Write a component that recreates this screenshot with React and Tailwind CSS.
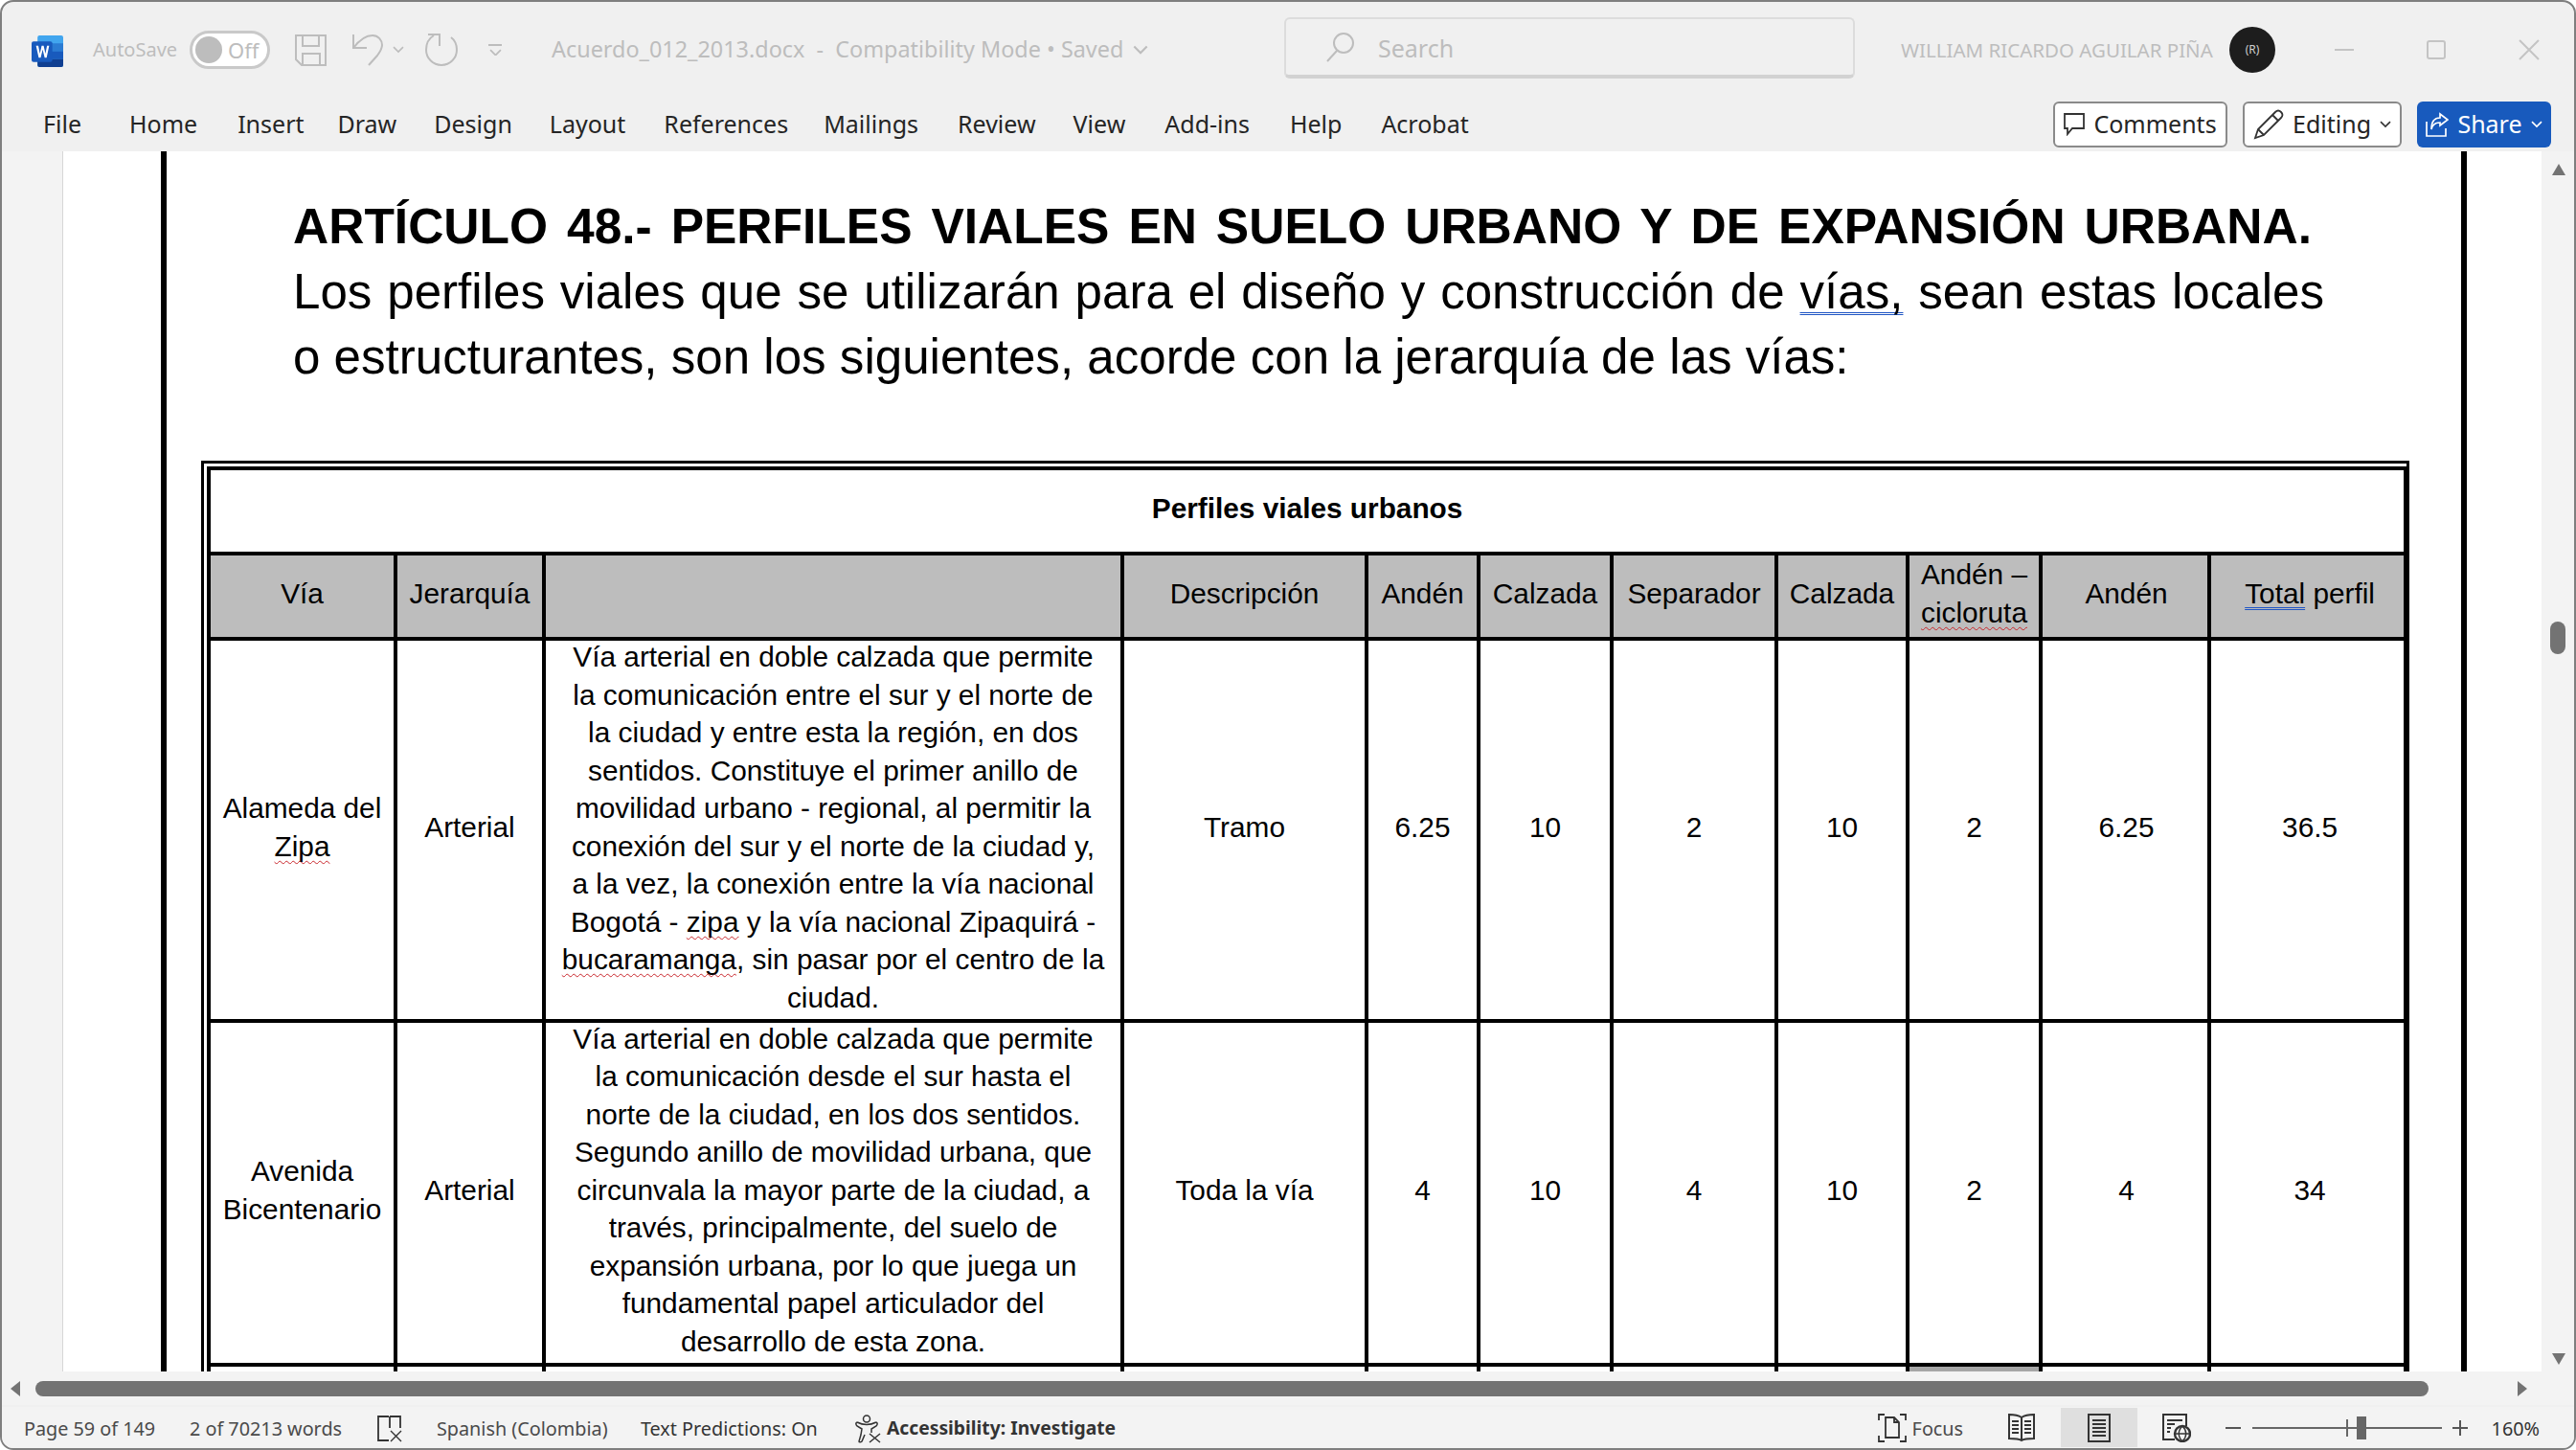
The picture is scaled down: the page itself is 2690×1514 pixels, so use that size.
import React from 'react';

const uiFont = { fontFamily: '"Noto Sans", sans-serif' };

const tabs = [
  { label: 'Home', className: 'ml-[2px]' },
  { label: 'Insert', className: 'ml-[3px] -mr-[4px]' },
  { label: 'Draw' },
  { label: 'Design' },
  { label: 'Layout' },
  { label: 'References', className: 'ml-[1px] -mr-[1px]' },
  { label: 'Mailings', className: '-ml-[1px] mr-[1px]' },
  { label: 'Review', className: 'ml-[1px]' },
  { label: 'View' },
  { label: 'Add-ins', className: 'ml-[2px]' },
  { label: 'Help', className: 'ml-[3px]' },
  { label: 'Acrobat', className: 'ml-[2px]' },
];

const colWidths = ['w-[195px]', 'w-[155px]', 'w-[604px]', 'w-[255px]', 'w-[117px]', 'w-[139px]', 'w-[172px]', 'w-[137px]', 'w-[139px]', 'w-[176px]', 'w-[205px]'];

const Wavy = ({ children }) => (
  <span className="underline decoration-wavy decoration-[#c8262b] decoration-[1px] underline-offset-[4px] [text-decoration-skip-ink:none]">{children}</span>
);

const Grammar = ({ children }) => (
  <span className="underline decoration-double decoration-[#1f55c4] decoration-[1px] underline-offset-[4px] [text-decoration-skip-ink:none]">{children}</span>
);

const Cell = ({ children, className = '', colSpan }) => (
  <td colSpan={colSpan} className={`border-[4px] border-black text-center align-middle p-0 ${className}`}>
    <div className="-mt-[6px]">{children}</div>
  </td>
);

const Head = ({ children, className = '' }) => <Cell className={`bg-[#bdbdbd] ${className}`}>{children}</Cell>;

const WordLogo = () => (
  <svg width="33" height="33" viewBox="0 0 32 32">
    <rect x="6" y="0" width="26" height="32" rx="2" fill="#41a5ee" />
    <rect x="6" y="8" width="26" height="8" fill="#2b7cd3" />
    <rect x="6" y="16" width="26" height="8" fill="#185abd" />
    <path d="M6 24h26v6a2 2 0 0 1-2 2H8a2 2 0 0 1-2-2z" fill="#103f91" />
    <rect x="0" y="6" width="21" height="21" rx="2" fill="#185abd" />
    <path d="M4.500 10.500h2.300l1.600 8 1.800-8h2l1.800 8 1.600-8h2.200l-2.600 12h-2l-2-8.300-2 8.300h-2z" fill="#fff" />
  </svg>
);

const SaveIcon = () => (
  <svg width="33" height="33" viewBox="0 0 33 33" fill="none" stroke="#bdbdbd" strokeWidth="2">
    <path d="M1 1h31v31H7l-6-6z" />
    <path d="M8 1v11h17V1M8 32V20h18v12" />
  </svg>
);

const UndoIcon = () => (
  <svg width="32" height="34" viewBox="0 0 32 34" fill="none" stroke="#bdbdbd" strokeWidth="2">
    <path d="M1 1v14h14" />
    <path d="M1 15C8 6 14 2 21 2c6 0 10 5 10 10 0 4-2 7-5 11l-9 10" />
  </svg>
);

const RedoIcon = () => (
  <svg width="34" height="34" viewBox="0 0 34 34" fill="none" stroke="#bdbdbd" strokeWidth="2">
    <path d="M9 2c-5 3-8 8-8 15a16 16 0 1 0 32 0c0-6-2-10-6-13" />
    <path d="M3 2h12v12" transform="translate(0 -1)" />
  </svg>
);

const Chevron = ({ color = '#bdbdbd', size = 12 }) => (
  <svg width={size} height={size * 0.6} viewBox="0 0 12 7" fill="none" stroke={color} strokeWidth="1.6">
    <path d="M1 1l5 5 5-5" />
  </svg>
);

const SearchIcon = () => (
  <svg width="30" height="32" viewBox="0 0 30 32" fill="none" stroke="#bdbdbd" strokeWidth="2">
    <circle cx="18" cy="12" r="10" />
    <path d="M11 20L1 31" />
  </svg>
);

const CommentIcon = () => (
  <svg width="22" height="24" viewBox="0 0 22 24" fill="none" stroke="#333" strokeWidth="1.8">
    <path d="M1 1h20v15H9l-5 6v-6H1z" />
  </svg>
);

const PencilIcon = () => (
  <svg width="32" height="32" viewBox="0 0 32 32" fill="none" stroke="#333" strokeWidth="1.8">
    <path d="M2 30l3-9L23 3c2-2 4-2 6 0s2 4 0 6L11 27z" />
    <path d="M5 21l6 6M20 6l6 6" />
  </svg>
);

const ShareIcon = () => (
  <svg width="24" height="26" viewBox="0 0 24 26" fill="none" stroke="#fff" strokeWidth="1.7">
    <path d="M1 10v15h20v-8" />
    <path d="M15 2l8 6-8 6v-3c-5 0-8 2-9 7 0-8 3-12 9-12z" />
  </svg>
);

const ProofIcon = () => (
  <svg width="28" height="28" viewBox="0 0 28 28" fill="none" stroke="#333" strokeWidth="1.8">
    <path d="M13 1H2v25h11M14 1h11v12M14 1v12" />
    <path d="M15 16l11 11M26 16L15 27" strokeWidth="1.4" />
  </svg>
);

const AccessIcon = () => (
  <svg width="28" height="30" viewBox="0 0 28 30" fill="none" stroke="#333" strokeWidth="1.5">
    <circle cx="12" cy="4.500" r="3.500" />
    <path d="M2 8c-2 1-1 3 0 4l5 3-1 6-2 7c0 1 2 1 3 0l3-7M22 8c2 1 1 3 0 4l-5 3v4M2 8c4 2 7 2.500 10 2.500S18 10 22 8" />
    <path d="M15 20l11 9M26 20L15 29" />
  </svg>
);

const FocusIcon = () => (
  <svg width="30" height="30" viewBox="0 0 30 30" fill="none" stroke="#333" strokeWidth="1.8">
    <path d="M1 7V1h6M23 1h6v6M1 23v6h6M23 29h6v-6" />
    <path d="M8 25V4h9l5 5v16zM17 4v5h5" />
  </svg>
);

const ReadIcon = () => (
  <svg width="28" height="30" viewBox="0 0 28 30" fill="none" stroke="#333" strokeWidth="2">
    <path d="M14 4C11 2 6 1 1 1v25c5 0 10 0 13 2 3-2 8-2 13-2V1c-5 0-10 1-13 3zM14 4v24" />
    <path d="M4 8h7M4 12h7M4 16h7M4 20h7M17 8h7M17 12h7M17 16h7M17 20h7" />
  </svg>
);

const PrintIcon = () => (
  <svg width="24" height="30" viewBox="0 0 24 30" fill="none" stroke="#333" strokeWidth="2">
    <rect x="1" y="1" width="22" height="28" />
    <path d="M5 7h14M5 11h14M5 15h14M5 19h14M5 23h14" />
  </svg>
);

const WebIcon = () => (
  <svg width="30" height="30" viewBox="0 0 30 30" fill="none" stroke="#333" strokeWidth="2">
    <path d="M13 27H1V1h24v12" />
    <path d="M5 7h16M5 11h8M5 15h4M5 19h3" />
    <circle cx="21" cy="21" r="8" fill="#f3f3f3" strokeWidth="2.400" />
    <path d="M13 21h16M21 13c-5 5-5 11 0 16M21 13c5 5 5 11 0 16" strokeWidth="1.400" />
  </svg>
);

const App = () => {
  return (
    <div className="w-[2690px] h-[1514px] bg-white overflow-hidden">
      <div
        className="w-full h-full flex flex-col bg-[#f0f0f0] border-2 border-[#7f7f7f] rounded-[14px] overflow-hidden text-[#252525]"
        style={uiFont}
      >
        {/* title bar */}
        <div className="h-[64px] mt-[18px] flex items-center text-[#bdbdbd] text-[20px] shrink-0">
          <div className="ml-[31px] mt-[2px]"><WordLogo /></div>
          <span className="ml-[31px] w-[91px]">AutoSave</span>
          <div className="ml-[10px] w-[84px] h-[40px] rounded-full border-[3px] border-[#c9c9c9] bg-white flex items-center">
            <div className="ml-[3px] w-[28px] h-[28px] rounded-full bg-[#bdbdbd]" />
            <span className="ml-[6px] leading-none text-[22px]">Off</span>
          </div>
          <div className="ml-[26px] flex"><SaveIcon /></div>
          <div className="ml-[27px] flex"><UndoIcon /></div>
          <div className="ml-[10px] flex"><Chevron /></div>
          <div className="ml-[22px] flex"><RedoIcon /></div>
          <div className="ml-[32px] flex flex-col items-center gap-[3px]">
            <div className="w-[14px] h-[2px] bg-[#bdbdbd]" />
            <Chevron size={13} />
          </div>
          <span className="ml-[52px] w-[600px] whitespace-nowrap text-[23.400px]">Acuerdo_012_2013.docx&nbsp; - &nbsp;Compatibility Mode • Saved</span>
          <div className="ml-[7px] flex"><Chevron size={16} /></div>
          <div className="ml-[142px] mb-[4px] w-[596px] h-[64px] rounded-[6px] border-2 border-[#dcdcdc] border-b-[4px] border-b-[#d2d2d2] flex items-center">
            <div className="ml-[42px] flex"><SearchIcon /></div>
            <span className="ml-[24px] text-[25px] pt-[3px]">Search</span>
          </div>
          <span className="ml-[48px] text-[20.500px] w-[343px] whitespace-nowrap">WILLIAM RICARDO AGUILAR PIÑA</span>
          <div className="w-[48px] h-[48px] rounded-full bg-[#1d1d1d] flex items-center justify-center text-[12px] text-[#cfcfcf]">(R)</div>
          <div className="ml-[62px] w-[20px] h-[2px] bg-[#c4c4c4]" />
          <div className="ml-[76px] w-[20px] h-[20px] rounded-[3px] border-2 border-[#c4c4c4]" />
          <svg className="ml-[76px]" width="22" height="22" viewBox="0 0 22 22" fill="none" stroke="#c4c4c4" strokeWidth="2">
            <path d="M1 1l20 20M21 1L1 21" />
          </svg>
        </div>

        {/* ribbon tabs */}
        <div className="h-[74px] flex items-center text-[25px] shrink-0 pt-[18px]">
          <span className="ml-[43px] mr-[48px]">File</span>
          <div className="flex gap-[39px]">
            {tabs.map((tab) => (
              <span key={tab.label} className={tab.className}>{tab.label}</span>
            ))}
          </div>
          <div className="ml-auto mr-[24px] flex items-center gap-[16px]">
            <div className="w-[182px] h-[48px] rounded-[6px] border-2 border-[#8a8a8a] bg-white flex items-center justify-center gap-[9px]">
              <CommentIcon />
              <span>Comments</span>
            </div>
            <div className="w-[166px] h-[48px] rounded-[6px] border-2 border-[#8a8a8a] bg-white flex items-center justify-center gap-[9px]">
              <PencilIcon />
              <span>Editing</span>
              <Chevron color="#333" />
            </div>
            <div className="w-[140px] h-[48px] rounded-[6px] bg-[#185abd] text-white flex items-center justify-center gap-[9px]">
              <ShareIcon />
              <span>Share</span>
              <Chevron color="#fff" />
            </div>
          </div>
        </div>

        {/* document */}
        <div className="flex-1 min-h-0 flex bg-[#f3f3f3]">
          <div className="w-[64px] shrink-0 border-r border-[#d6d6d6]" />
          <div className="flex-1 min-w-0 bg-white overflow-hidden pl-[102px]" style={{ fontFamily: '"Liberation Sans", Arial, sans-serif' }}>
            <div className="w-[2408px] h-[1400px] border-x-[6px] border-black text-black">
              <div className="pt-[45px] pl-[132px] w-[2253px] text-[51.100px] leading-[68px]">
                <div className="w-[2108px] h-[68px] font-bold text-[51.500px] -mt-[1px] mb-[1px] [text-align-last:justify]">ARTÍCULO 48.- PERFILES VIALES EN SUELO URBANO Y DE EXPANSIÓN URBANA.</div>
                <div className="[text-align-last:justify]">Los perfiles viales que se utilizarán para el diseño y construcción de <Grammar>vías,</Grammar> sean estas locales</div>
                <div>o estructurantes, son los siguientes, acorde con la jerarquía de las vías:</div>
              </div>

              <div className="mt-[74px] ml-[36px] w-[2306px] border-[3px] border-black p-[3px] text-[29.800px] leading-[39.500px]">
                <table className="w-full table-fixed border-collapse">
                  <colgroup>
                    {colWidths.map((w, i) => (
                      <col key={i} className={w} />
                    ))}
                  </colgroup>
                  <tbody>
                    <tr className="h-[89px]">
                      <Cell className="font-bold" colSpan={11}>Perfiles viales urbanos</Cell>
                    </tr>
                    <tr className="h-[89px]">
                      <Head>Vía</Head>
                      <Head>Jerarquía</Head>
                      <Head />
                      <Head>Descripción</Head>
                      <Head>Andén</Head>
                      <Head>Calzada</Head>
                      <Head>Separador</Head>
                      <Head>Calzada</Head>
                      <Head>Andén –<br /><Wavy>cicloruta</Wavy></Head>
                      <Head className="pl-[3px]">Andén</Head>
                      <Head className="pl-[5px]"><Grammar>Total</Grammar> perfil</Head>
                    </tr>
                    <tr className="h-[399px]">
                      <Cell>Alameda del<br /><Wavy>Zipa</Wavy></Cell>
                      <Cell>Arterial</Cell>
                      <Cell>
                        Vía arterial en doble calzada que permite<br />
                        la comunicación entre el sur y el norte de<br />
                        la ciudad y entre esta la región, en dos<br />
                        sentidos. Constituye el primer anillo de<br />
                        movilidad urbano - regional, al permitir la<br />
                        conexión del sur y el norte de la ciudad y,<br />
                        a la vez, la conexión entre la vía nacional<br />
                        Bogotá - <Wavy>zipa</Wavy> y la vía nacional Zipaquirá -<br />
                        <Wavy>bucaramanga</Wavy>, sin pasar por el centro de la<br />
                        ciudad.
                      </Cell>
                      <Cell>Tramo</Cell>
                      <Cell>6.25</Cell>
                      <Cell>10</Cell>
                      <Cell>2</Cell>
                      <Cell>10</Cell>
                      <Cell>2</Cell>
                      <Cell className="pl-[3px]">6.25</Cell>
                      <Cell className="pl-[5px]">36.5</Cell>
                    </tr>
                    <tr className="h-[359px]">
                      <Cell>Avenida<br />Bicentenario</Cell>
                      <Cell>Arterial</Cell>
                      <Cell>
                        Vía arterial en doble calzada que permite<br />
                        la comunicación desde el sur hasta el<br />
                        norte de la ciudad, en los dos sentidos.<br />
                        Segundo anillo de movilidad urbana, que<br />
                        circunvala la mayor parte de la ciudad, a<br />
                        través, principalmente, del suelo de<br />
                        expansión urbana, por lo que juega un<br />
                        fundamental papel articulador del<br />
                        desarrollo de esta zona.
                      </Cell>
                      <Cell>Toda la vía</Cell>
                      <Cell>4</Cell>
                      <Cell>10</Cell>
                      <Cell>4</Cell>
                      <Cell>10</Cell>
                      <Cell>2</Cell>
                      <Cell className="pl-[3px]">4</Cell>
                      <Cell className="pl-[5px]">34</Cell>
                    </tr>
                    <tr className="h-[120px]">
                      <Cell />
                      <Cell />
                      <td className="border-[4px] border-black text-center align-top p-0">Vía arterial de doble calzada que articula</td>
                      <Cell />
                      <Cell />
                      <Cell />
                      <Cell />
                      <Cell />
                      <Cell className="bg-[#a6a6a6]" />
                      <Cell />
                      <Cell />
                    </tr>
                  </tbody>
                </table>
              </div>
            </div>
          </div>

          {/* vertical scrollbar */}
          <div className="w-[34px] shrink-0 relative">
            <svg className="absolute left-[10px] top-[12px]" width="16" height="14" viewBox="0 0 16 14" fill="#737373">
              <path d="M8 1l7 12H1z" />
            </svg>
            <div className="absolute left-[9px] top-[491px] w-[16px] h-[34px] rounded-full bg-[#737373]" />
            <svg className="absolute left-[10px] bottom-[6px]" width="16" height="14" viewBox="0 0 16 14" fill="#737373">
              <path d="M8 13L1 1h14z" />
            </svg>
          </div>
        </div>

        {/* horizontal scrollbar */}
        <div className="h-[35px] shrink-0 bg-[#f3f3f3] flex items-center">
          <svg className="ml-[8px]" width="12" height="18" viewBox="0 0 12 18" fill="#737373">
            <path d="M1 9L11 1v16z" />
          </svg>
          <div className="ml-[15px] w-[2499px] h-[16px] rounded-full bg-[#737373]" />
          <svg className="ml-[92px]" width="12" height="18" viewBox="0 0 12 18" fill="#737373">
            <path d="M11 9L1 1v16z" />
          </svg>
        </div>

        {/* status bar */}
        <div className="h-[43px] mt-[2px] shrink-0 bg-[#f3f3f3] flex items-center text-[19.800px] text-[#4a4a4a] pt-[2px]">
          <span className="ml-[23px] w-[173px]">Page 59 of 149</span>
          <span className="w-[195px]">2 of 70213 words</span>
          <ProofIcon />
          <span className="ml-[35px] w-[213px]">Spanish (Colombia)</span>
          <span className="w-[224px] text-[#333]">Text Predictions: On</span>
          <AccessIcon />
          <span className="ml-[5px] font-bold text-[19.300px] text-[#333] whitespace-nowrap">Accessibility: Investigate</span>
          <div className="ml-auto flex items-center h-full -mt-[2px]">
            <FocusIcon />
            <span className="ml-[6px] w-[100px] pt-[2px]">Focus</span>
            <ReadIcon />
            <div className="ml-[27px] w-[80px] h-full bg-[#dfdfdf] flex items-center justify-center"><PrintIcon /></div>
            <div className="ml-[26px] flex"><WebIcon /></div>
            <div className="ml-[36px] w-[16px] h-[2px] bg-[#555]" />
            <div className="ml-[12px] w-[198px] h-[2px] bg-[#666] relative">
              <div className="absolute left-[98px] top-[-8px] w-[2px] h-[18px] bg-[#666]" />
              <div className="absolute left-[109px] top-[-11px] w-[10px] h-[24px] bg-[#666]" />
            </div>
            <div className="ml-[11px] relative w-[16px] h-[16px]">
              <div className="absolute left-0 top-[7px] w-[16px] h-[2px] bg-[#555]" />
              <div className="absolute left-[7px] top-0 w-[2px] h-[16px] bg-[#555]" />
            </div>
            <span className="ml-[25px] mr-[36px] pt-[2px] text-[#333]">160%</span>
          </div>
        </div>
      </div>
    </div>
  );
};

export default App;
